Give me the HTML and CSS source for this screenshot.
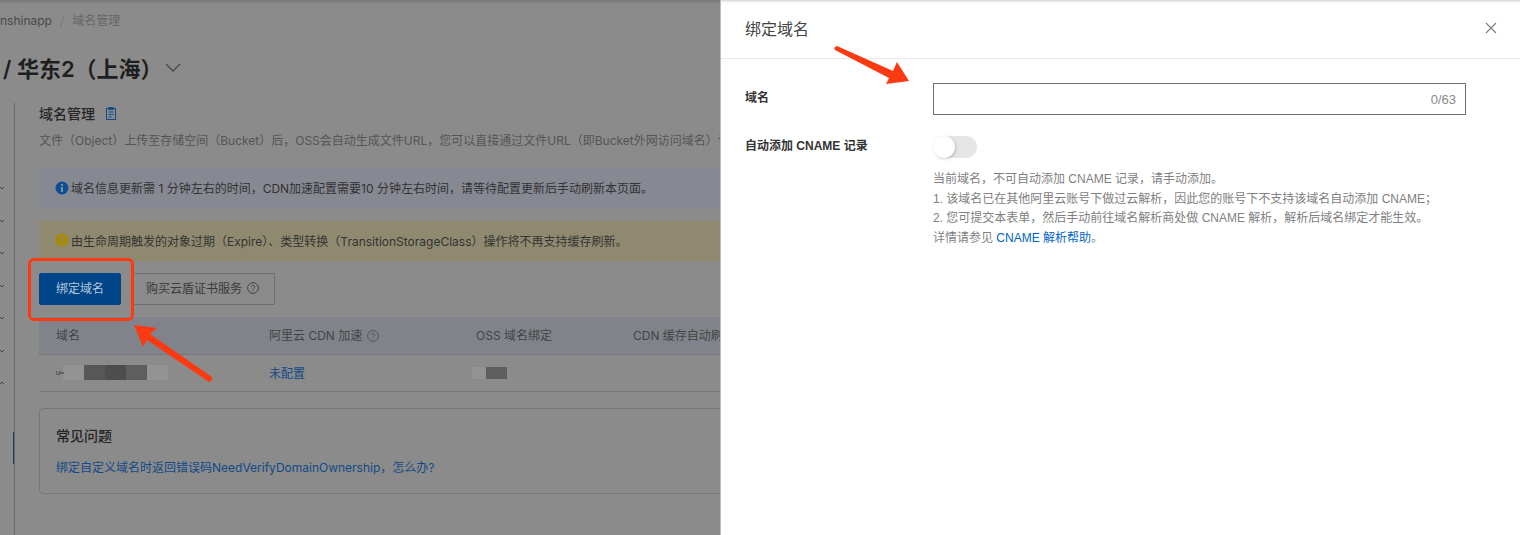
FILE: index.html
```html
<!DOCTYPE html>
<html lang="en">

<head>
    <meta charset="UTF-8">
    <meta name="viewport" content="width=device-width, initial-scale=1.0">
    <title>绑定域名</title>
    <link rel="stylesheet" href="styles.css">
</head>

<body>

    <div id="page">
        <div class="crumbs">
            <span>nshinapp</span>
            <span class="crumb-sep">/</span>
            <span class="crumb-now">域名管理</span>
        </div>

        <div class="region">
            <h1>/ 华东2（上海）</h1>
            <svg class="region-arrow" width="16" height="9" viewBox="0 0 16 9">
                <path d="M1 1l7 7 7-7" fill="none" stroke="#4a4a4a" stroke-width="1.3" />
            </svg>
        </div>

        <div class="main">
            <div class="side">
                <svg class="tick" width="4" height="4" viewBox="0 0 4 4"><path d="M0 1l2 2 2-2" fill="none" stroke="#444" /></svg>
                <svg class="tick" width="4" height="4" viewBox="0 0 4 4"><path d="M0 1l2 2 2-2" fill="none" stroke="#444" /></svg>
                <svg class="tick" width="4" height="4" viewBox="0 0 4 4"><path d="M0 1l2 2 2-2" fill="none" stroke="#444" /></svg>
                <svg class="tick" width="4" height="4" viewBox="0 0 4 4"><path d="M0 1l2 2 2-2" fill="none" stroke="#444" /></svg>
                <svg class="tick" width="4" height="4" viewBox="0 0 4 4"><path d="M0 1l2 2 2-2" fill="none" stroke="#444" /></svg>
                <svg class="tick" width="4" height="4" viewBox="0 0 4 4"><path d="M0 1l2 2 2-2" fill="none" stroke="#444" /></svg>
                <svg class="tick" width="4" height="4" viewBox="0 0 4 4"><path d="M0 3l2-2 2 2" fill="none" stroke="#444" /></svg>
                <div class="side-active"></div>
            </div>

            <div class="content">
                <div class="section-title">
                    <h2>域名管理</h2>
                    <svg width="12" height="13" viewBox="0 0 12 13" fill="none" stroke="#114a86" stroke-width="1">
                        <rect x="1.5" y="1.5" width="9" height="11" />
                        <rect x="4" y="0.5" width="4" height="2" fill="#114a86" />
                        <path d="M3.5 5h5M3.5 7.5h5M3.5 10h3" />
                    </svg>
                </div>
                <p class="desc">文件（Object）上传至存储空间（Bucket）后，OSS会自动生成文件URL，您可以直接通过文件URL（即Bucket外网访问域名）访问该文件</p>

                <div class="notice notice-info">
                    <svg width="14" height="14" viewBox="0 0 14 14">
                        <circle cx="7" cy="7" r="6.5" fill="#0c4f96" />
                        <rect x="6" y="6" width="2" height="5" fill="#8a8d95" />
                        <rect x="6" y="3" width="2" height="2" fill="#8a8d95" />
                    </svg>
                    <span>域名信息更新需 1 分钟左右的时间，CDN加速配置需要10 分钟左右时间，请等待配置更新后手动刷新本页面。</span>
                </div>
                <div class="notice notice-warn">
                    <svg width="14" height="14" viewBox="0 0 14 14">
                        <circle cx="7" cy="7" r="6.5" fill="#a98a08" />
                        <rect x="6" y="3" width="2" height="5" fill="#8f8b70" />
                        <rect x="6" y="9" width="2" height="2" fill="#8f8b70" />
                    </svg>
                    <span>由生命周期触发的对象过期（Expire）、类型转换（TransitionStorageClass）操作将不再支持缓存刷新。</span>
                </div>

                <div class="actions">
                    <button class="btn btn-primary">绑定域名</button>
                    <button class="btn btn-cert">购买云盾证书服务
                        <svg class="help" width="12" height="12" viewBox="0 0 12 12">
                            <circle cx="6" cy="6" r="5.4" fill="none" stroke="#444" />
                            <path d="M4.4 4.8a1.6 1.6 0 1 1 2.4 1.4c-.6.3-.8.6-.8 1.1" fill="none" stroke="#444" />
                            <rect x="5.5" y="8.2" width="1" height="1" fill="#444" />
                        </svg>
                    </button>
                </div>

                <div class="table-row table-head">
                    <div>域名</div>
                    <div>阿里云 CDN 加速
                        <svg class="help" width="12" height="12" viewBox="0 0 12 12">
                            <circle cx="6" cy="6" r="5.4" fill="none" stroke="#555" />
                            <path d="M4.4 4.8a1.6 1.6 0 1 1 2.4 1.4c-.6.3-.8.6-.8 1.1" fill="none" stroke="#555" />
                            <rect x="5.5" y="8.2" width="1" height="1" fill="#555" />
                        </svg>
                    </div>
                    <div>OSS 域名绑定</div>
                    <div>CDN 缓存自动刷新</div>
                </div>
                <div class="table-row table-body">
                    <div class="mosaic">
                        <span class="blur-text">u~</span>
                        <i class="cell cell-light"></i>
                        <i class="cell cell-a"></i>
                        <i class="cell cell-b"></i>
                        <i class="cell cell-c"></i>
                        <i class="cell cell-light"></i>
                    </div>
                    <div><a href="#">未配置</a></div>
                    <div class="mosaic mosaic-oss">
                        <i class="cell cell-light"></i>
                        <i class="cell cell-c"></i>
                    </div>
                    <div></div>
                </div>

                <div class="faq">
                    <h3>常见问题</h3>
                    <a href="#">绑定自定义域名时返回错误码NeedVerifyDomainOwnership，怎么办?</a>
                </div>
            </div>
        </div>
    </div>

    <div id="drawer">
        <div class="drawer-head">
            <span>绑定域名</span>
            <svg width="12" height="12" viewBox="0 0 12 12">
                <path d="M1 1l10 10M11 1L1 11" fill="none" stroke="#7a7a7a" stroke-width="1.1" />
            </svg>
        </div>
        <div class="form">
            <label class="form-label label-name">域名</label>
            <div class="input">
                <span>0/63</span>
            </div>
            <label class="form-label label-top">自动添加 CNAME 记录</label>
            <div>
                <div class="switch"><div class="knob"></div></div>
                <div class="help-text">
                    当前域名，不可自动添加 CNAME 记录，请手动添加。<br>
                    1. 该域名已在其他阿里云账号下做过云解析，因此您的账号下不支持该域名自动添加 CNAME；<br>
                    2. 您可提交本表单，然后手动前往域名解析商处做 CNAME 解析，解析后域名绑定才能生效。<br>
                    详情请参见 <a href="#">CNAME 解析帮助</a>。
                </div>
            </div>
        </div>
    </div>

    <!-- red marks drawn on top of the screenshot -->
    <div class="mark-box"></div>
    <svg class="marks" width="1520" height="535" viewBox="0 0 1520 535">
        <path d="M134 325L157 328 150 334 212 377Q213 381 209 382L147 340 143 347Z" fill="#fb3a12" />
        <path d="M909 81L886 84 889 78 835 50Q833 47 837 46L893 71 897 62Z" fill="#fb3a12" />
    </svg>

</body>

</html>
```

FILE: styles.css
```css
* {
    box-sizing: border-box;
}

body {
    font-family: 'Liberation Sans', 'Noto Sans CJK SC', sans-serif;
    font-size: 12px;
    margin: 0;
    padding: 0;
    height: 535px;
    display: flex;
    overflow: hidden;
    position: relative;
    background-color: #8b8b8b;
}

a {
    text-decoration: none;
}

#page {
    width: 720px;
    flex-shrink: 0;
    overflow: hidden;
    font-family: 'Inter', 'Noto Sans CJK SC', sans-serif;
    color: #3c3c3c;
    background: linear-gradient(#777, #8b8b8b 4px);
}

.crumbs {
    display: flex;
    gap: 8px;
    padding-top: 13px;
    height: 35px;
    line-height: 15px;
    color: #4a4a4a;
    white-space: nowrap;
}

.crumb-sep {
    color: #777;
}

.crumb-now {
    color: #666;
}

.region {
    display: flex;
    align-items: center;
    gap: 2px;
    height: 66px;
    padding: 0 0 2px 3px;
}

.region h1 {
    margin: 0;
    font-size: 22px;
    font-weight: 600;
    color: #1e1e1e;
    white-space: nowrap;
}

.main {
    display: flex;
    height: 434px;
    margin-top: 2px;
}

.side {
    width: 15px;
    flex-shrink: 0;
    border-right: 1px solid #6a6a6a;
    display: flex;
    flex-direction: column;
    gap: 28.5px;
    padding-top: 83px;
    position: relative;
}

.side-active {
    position: absolute;
    right: 0;
    top: 329px;
    width: 1px;
    height: 32px;
    background-color: #0d3c73;
}

.content {
    width: 1000px;
    flex-shrink: 0;
    padding: 0 0 0 24px;
}

.section-title {
    display: flex;
    align-items: center;
    gap: 10px;
    height: 20px;
}

.section-title h2 {
    margin: 0;
    font-size: 14px;
    font-weight: 500;
    color: #262626;
}

.desc {
    margin: 8px 0 0;
    line-height: 20px;
    color: #555;
    white-space: nowrap;
}

.notice {
    height: 41px;
    margin-top: 0;
    padding: 0 16px 2px;
    display: flex;
    align-items: center;
    gap: 2px;
    color: #333;
    white-space: nowrap;
}

.notice-info {
    margin-top: 17px;
    background-color: #868992;
}

.notice-warn {
    margin-top: 12px;
    height: 40px;
    background-color: #8f8a6f;
}

.actions {
    display: flex;
    gap: 12px;
    margin-top: 12px;
}

.btn {
    height: 32px;
    padding: 0 15px 3px 12px;
    font: inherit;
    color: #3a3a3a;
    background: none;
    border: 1px solid #6e6e6e;
    border-radius: 1px;
    display: flex;
    align-items: center;
    gap: 4px;
}

.btn-primary {
    width: 82px;
    padding: 0 0 3px;
    justify-content: center;
    color: #b8c6d8;
    background-color: #004588;
    border-color: #004588;
    border-radius: 2px;
}

.table-row {
    display: grid;
    grid-template-columns: 213px 207px 157px 1fr;
    padding-left: 17px;
    align-items: center;
    border-bottom: 1px solid #777;
}

.table-head {
    height: 38px;
    margin-top: 12px;
    padding-bottom: 2px;
    color: #444;
    background-color: #81838a;
}

.table-body {
    height: 37px;
    padding-bottom: 1px;
}

.table-body a {
    color: #114a86;
}

.help {
    vertical-align: -2px;
    margin-left: 1px;
}

.mosaic {
    display: flex;
    align-items: center;
    height: 15px;
}

.blur-text {
    width: 7px;
    font-size: 7px;
    color: #333;
    filter: blur(0.4px);
}

.cell {
    display: block;
    width: 21px;
    height: 15px;
}

.cell-light {
    background-color: #939393;
}

.cell-a {
    background-color: #575757;
}

.cell-b {
    background-color: #4d4d4d;
}

.cell-c {
    background-color: #5e5e5e;
}

.mosaic-oss {
    margin-left: -4px;
}

.mosaic-oss .cell {
    height: 12px;
}

.mosaic-oss .cell-light {
    width: 14px;
}

.faq {
    margin-top: 16px;
    height: 86px;
    padding: 17px 16px;
    border: 1px solid #777;
    border-radius: 4px;
}

.faq h3 {
    margin: 0 0 13px;
    font-size: 14px;
    line-height: 19px;
    font-weight: 500;
    color: #262626;
}

.faq a {
    color: #114a86;
}

#drawer {
    width: 800px;
    flex-shrink: 0;
    background-color: #fff;
    border-left: 1px solid #bdbdbd;
    box-shadow: inset 0 3px 3px -2px #ccc;
}

.drawer-head {
    height: 59px;
    padding: 0 23px 2px 24px;
    border-bottom: 1px solid #e8e8e8;
    display: flex;
    align-items: center;
    justify-content: space-between;
    font-size: 16px;
    color: #444;
}

.form {
    display: grid;
    grid-template-columns: 188px 533px;
    row-gap: 21px;
    padding: 24px 0 0 24px;
}

.form-label {
    font-weight: 600;
    color: #333;
    display: flex;
    align-items: center;
}

.label-name {
    padding-bottom: 6px;
}

.label-top {
    align-items: flex-start;
    line-height: 18px;
    padding-top: 1px;
}

.input {
    height: 32px;
    border: 1px solid #6f6f6f;
    display: flex;
    align-items: center;
    justify-content: flex-end;
    padding: 0 9px;
    font-size: 13px;
    color: #888;
}

.switch {
    width: 44px;
    height: 22px;
    border-radius: 11px;
    background-color: #e6e6e6;
}

.knob {
    width: 22px;
    height: 22px;
    border-radius: 50%;
    background-color: #fff;
    box-shadow: 1px 1px 3px rgba(0, 0, 0, 0.2);
}

.help-text {
    margin-top: 12px;
    line-height: 19.6px;
    color: #808080;
    white-space: nowrap;
}

.help-text a {
    color: #0064c8;
}

.mark-box {
    position: absolute;
    left: 28px;
    top: 258px;
    width: 106px;
    height: 63px;
    border: 3px solid #fb3a12;
    border-radius: 6px;
}

.marks {
    position: absolute;
    left: 0;
    top: 0;
}
```
